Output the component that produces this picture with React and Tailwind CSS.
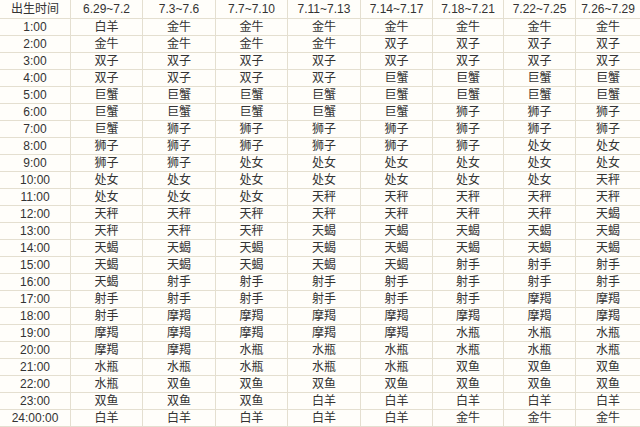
import React from 'react';

const headers = ['出生时间', '6.29~7.2', '7.3~7.6', '7.7~7.10', '7.11~7.13', '7.14~7.17', '7.18~7.21', '7.22~7.25', '7.26~7.29'];

const rows = [
  ['1:00', '白羊', '金牛', '金牛', '金牛', '金牛', '金牛', '金牛', '金牛'],
  ['2:00', '金牛', '金牛', '金牛', '金牛', '双子', '双子', '双子', '双子'],
  ['3:00', '双子', '双子', '双子', '双子', '双子', '双子', '双子', '双子'],
  ['4:00', '双子', '双子', '双子', '双子', '巨蟹', '巨蟹', '巨蟹', '巨蟹'],
  ['5:00', '巨蟹', '巨蟹', '巨蟹', '巨蟹', '巨蟹', '巨蟹', '巨蟹', '巨蟹'],
  ['6:00', '巨蟹', '巨蟹', '巨蟹', '巨蟹', '巨蟹', '狮子', '狮子', '狮子'],
  ['7:00', '巨蟹', '狮子', '狮子', '狮子', '狮子', '狮子', '狮子', '狮子'],
  ['8:00', '狮子', '狮子', '狮子', '狮子', '狮子', '狮子', '处女', '处女'],
  ['9:00', '狮子', '狮子', '处女', '处女', '处女', '处女', '处女', '处女'],
  ['10:00', '处女', '处女', '处女', '处女', '处女', '处女', '处女', '天秤'],
  ['11:00', '处女', '处女', '处女', '天秤', '天秤', '天秤', '天秤', '天秤'],
  ['12:00', '天秤', '天秤', '天秤', '天秤', '天秤', '天秤', '天秤', '天蝎'],
  ['13:00', '天秤', '天秤', '天秤', '天蝎', '天蝎', '天蝎', '天蝎', '天蝎'],
  ['14:00', '天蝎', '天蝎', '天蝎', '天蝎', '天蝎', '天蝎', '天蝎', '天蝎'],
  ['15:00', '天蝎', '天蝎', '天蝎', '天蝎', '天蝎', '射手', '射手', '射手'],
  ['16:00', '天蝎', '射手', '射手', '射手', '射手', '射手', '射手', '射手'],
  ['17:00', '射手', '射手', '射手', '射手', '射手', '射手', '摩羯', '摩羯'],
  ['18:00', '射手', '摩羯', '摩羯', '摩羯', '摩羯', '摩羯', '摩羯', '摩羯'],
  ['19:00', '摩羯', '摩羯', '摩羯', '摩羯', '摩羯', '水瓶', '水瓶', '水瓶'],
  ['20:00', '摩羯', '摩羯', '水瓶', '水瓶', '水瓶', '水瓶', '水瓶', '水瓶'],
  ['21:00', '水瓶', '水瓶', '水瓶', '水瓶', '水瓶', '双鱼', '双鱼', '双鱼'],
  ['22:00', '水瓶', '双鱼', '双鱼', '双鱼', '双鱼', '双鱼', '双鱼', '双鱼'],
  ['23:00', '双鱼', '双鱼', '双鱼', '白羊', '白羊', '白羊', '白羊', '白羊'],
  ['24:00:00', '白羊', '白羊', '白羊', '白羊', '白羊', '金牛', '金牛', '金牛'],
];

const App = () => {
  return (
    <div
      className="w-[640px] h-[427px] overflow-hidden bg-[#fffefa] text-[#333] text-[12px]"
      style={{ fontFamily: '"Liberation Sans", "Noto Sans CJK SC", sans-serif' }}
    >
      {/* zodiac table */}
      <div className="grid grid-cols-[71px_72px_73px_72px_73px_72px_71px_72px_64px]">
        {headers.map((h, i) => (
          <div
            key={h}
            className={`h-[19px] flex items-center justify-center border-b border-[#e4dfd0] leading-none ${i < 8 ? 'border-r' : ''}`}
          >
            {h}
          </div>
        ))}
        {rows.map((row) =>
          row.map((cell, i) => (
            <div
              key={row[0] + i}
              className={`h-[17px] flex items-center justify-center border-b border-[#e4dfd0] leading-none ${i < 8 ? 'border-r' : ''}`}
            >
              {cell}
            </div>
          ))
        )}
      </div>
    </div>
  );
};

export default App;
